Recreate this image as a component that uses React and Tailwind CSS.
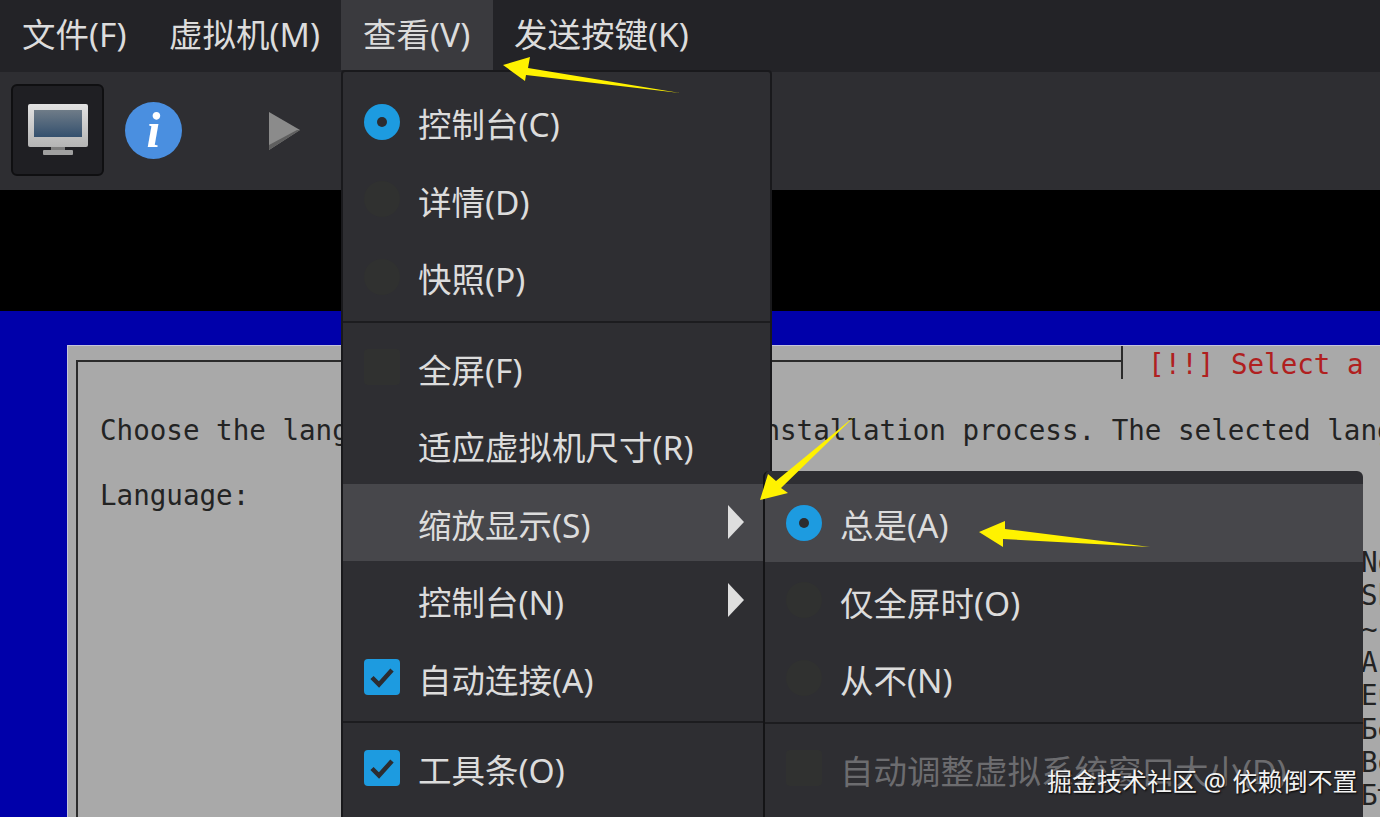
const TOP_MENUS = [
  { label: '文件(F)', className: 'w-[148px] pl-[22px]' },
  { label: '虚拟机(M)', className: 'w-[193px] pl-[21px]' },
  { label: '查看(V)', className: 'w-[152px] pl-[22px] bg-[#3a3a3e]' },
  { label: '发送按键(K)', className: 'pl-[21px]' },
];

const VIEW_GROUPS = [
  [
    { type: 'radio', on: true, label: '控制台(C)' },
    { type: 'radio', label: '详情(D)' },
    { type: 'radio', label: '快照(P)' },
  ],
  [
    { type: 'box', label: '全屏(F)' },
    { label: '适应虚拟机尺寸(R)' },
    { label: '缩放显示(S)', sub: true, active: true },
    { label: '控制台(N)', sub: true },
    { type: 'check', label: '自动连接(A)' },
  ],
  [{ type: 'check', label: '工具条(O)' }],
];

const SCALE_GROUPS = [
  [
    { type: 'radio', on: true, label: '总是(A)', active: true },
    { type: 'radio', label: '仅全屏时(O)' },
    { type: 'radio', label: '从不(N)' },
  ],
  [{ type: 'box', label: '自动调整虚拟系统窗口大小(D)', disabled: true }],
];

const LANGUAGES = ['No localization', 'Shqip', '~', 'Asturianu', 'Euskara', 'Беларуская', 'Bosanski', 'Български'];

function Indicator({ type, on }) {
  if (type === 'radio' && on) {
    return (
      <span className="flex h-9 w-9 items-center justify-center rounded-full bg-[#1d9be0]">
        <span className="h-[10px] w-[10px] rounded-full bg-[#2c2c30]" />
      </span>
    );
  }
  if (type === 'radio') return <span className="h-9 w-9 rounded-full bg-[#303130]" />;
  if (type === 'box') return <span className="h-9 w-9 rounded bg-[#303130]" />;
  if (type === 'check') {
    return (
      <span className="flex h-9 w-9 items-center justify-center rounded bg-[#1d9be0]">
        <svg width="26" height="24" viewBox="0 0 26 24" fill="none">
          <path d="M3 12.5l7 7L23 5" stroke="#2c2c30" strokeWidth="4.5" />
        </svg>
      </span>
    );
  }
  return null;
}

function MenuRow({ item }) {
  return (
    <div className={`flex h-[77.5px] items-center pl-[21px] pr-[25px] ${item.active ? 'bg-[#47474b]' : ''}`}>
      <span className="flex h-9 w-9 shrink-0 items-center justify-center">
        <Indicator type={item.type} on={item.on} />
      </span>
      <span className={`ml-[18px] flex-1 whitespace-nowrap pt-[5px] ${item.disabled ? 'text-[#6c6c6f]' : 'text-[#dcdcdc]'}`}>
        {item.label}
      </span>
      {item.sub && (
        <svg width="18" height="34" viewBox="0 0 18 34">
          <path d="M1 0l16 17L1 34z" fill="#dedede" />
        </svg>
      )}
    </div>
  );
}

function MenuGroups({ groups }) {
  return groups.map((group, i) => (
    <div key={i}>
      {i > 0 && <div className="mb-[6px] mt-[5px] h-[2px] bg-[#1c1c1f]" />}
      {group.map(item => <MenuRow key={item.label} item={item} />)}
    </div>
  ));
}

function MonitorIcon() {
  return (
    <svg width="64" height="56" viewBox="0 0 64 56">
      <defs>
        <linearGradient id="screen" x1="0" y1="0" x2="0" y2="1">
          <stop offset="0" stopColor="#6f7c88" />
          <stop offset="1" stopColor="#34506e" />
        </linearGradient>
        <linearGradient id="bezel" x1="0" y1="0" x2="0" y2="1">
          <stop offset="0" stopColor="#e2e2e2" />
          <stop offset="1" stopColor="#b4b4b4" />
        </linearGradient>
      </defs>
      <rect x="2" y="2" width="60" height="43" rx="2" fill="url(#bezel)" />
      <rect x="8" y="8" width="48" height="27" fill="url(#screen)" />
      <rect x="25" y="45" width="14" height="3" fill="#7e7e7e" />
      <rect x="17" y="48" width="30" height="5" rx="1" fill="#a0a0a0" />
    </svg>
  );
}

function Toolbar() {
  return (
    <div className="flex h-[118px] shrink-0 items-center bg-[#2e2e32] pb-[2px] pl-[11px]">
      <div className="flex h-[92px] w-[93px] items-center justify-center rounded-md border-2 border-[#0f0f11] bg-[#1f1f23]">
        <MonitorIcon />
      </div>
      <div className="ml-[21px] flex h-[57px] w-[57px] items-center justify-center rounded-full bg-[#4a8fe0] text-[50px] font-bold italic leading-none text-white [font-family:'Liberation_Serif',serif]">
        i
      </div>
      <svg className="ml-[86px] mt-[2px]" width="34" height="40" viewBox="0 0 34 40">
        <path d="M1 1l31 18L1 39z" fill="#8b8b8b" />
        <path d="M1 39l31-20-3 0L1 34z" fill="#5f5f5f" />
      </svg>
    </div>
  );
}

function Console() {
  return (
    <div className="min-h-0 flex-1 overflow-hidden bg-[#0000aa] pl-[67px] pt-[34px]">
      <div className="h-full border-l border-t border-[#c4c4dc] bg-[#a9a9a9] pl-[8px] pt-[14px] text-[27.55px] leading-[33.3px] text-[#232323] [font-family:'DejaVu_Sans_Mono','Liberation_Mono',monospace]">
        <div className="relative h-full w-[1047px] border-l-2 border-t-2 border-[#2b2b2b] pl-[22px] pt-[52px] whitespace-nowrap">
          <div className="absolute -top-[16px] right-0 h-[33px] w-[2px] bg-[#2b2b2b]" />
          <div className="absolute -top-[14px] left-[1070px] text-[#b0201f]">[!!] Select a language</div>
          <div>Choose the language to be used for the installation process. The selected language</div>
          <div className="mt-[31.5px]">Language:</div>
          <div className="ml-[1261px] mt-[34px]">
            {LANGUAGES.map(l => <div key={l}>{l}</div>)}
          </div>
        </div>
      </div>
    </div>
  );
}

function Arrows() {
  return (
    <svg className="pointer-events-none absolute left-0 top-0" width="1380" height="817" viewBox="0 0 1380 817">
      <g fill="#fff200">
        <path d="M503 65L530 57L528 68L680 93L526 75L525 81z" />
        <path d="M760 500L768 474L776 481L855 416L781 488L788 493z" />
        <path d="M979 532L1005 521L1005 529L1150 547L1003 539L1003 547z" />
      </g>
    </svg>
  );
}

export default function App() {
  return (
    <div className="relative flex h-[817px] w-[1380px] flex-col overflow-hidden bg-black text-[33.5px] [font-family:'Noto_Sans','Noto_Sans_CJK_SC',sans-serif]">
      <div className="flex h-[72px] shrink-0 bg-[#232327] pb-[2px] text-[#dcdcdc]">
        {TOP_MENUS.map(m => (
          <div key={m.label} className={`flex h-[70px] items-center whitespace-nowrap pb-[2px] ${m.className}`}>
            {m.label}
          </div>
        ))}
      </div>
      <Toolbar />
      <div className="h-[121px] shrink-0 bg-black" />
      <Console />

      {/* view menu */}
      <div className="absolute left-[341px] top-[70px] h-[760px] w-[431px] rounded-t border-2 border-[#19191c] bg-[#2e2e32] pt-[11px]">
        <MenuGroups groups={VIEW_GROUPS} />
      </div>

      {/* scale submenu */}
      <div className="absolute left-[763px] top-[471px] h-[360px] w-[600px] rounded-t-md border-l-2 border-[#141416] bg-[#2e2e32] pt-[13px]">
        <MenuGroups groups={SCALE_GROUPS} />
      </div>

      <Arrows />

      <div className="absolute left-[1047px] top-[765px] whitespace-nowrap text-[25px] leading-[32px] text-[#f2f2f2] [text-shadow:1px_1px_2px_#000]">
        掘金技术社区 @ 依赖倒不置
      </div>
    </div>
  );
}
